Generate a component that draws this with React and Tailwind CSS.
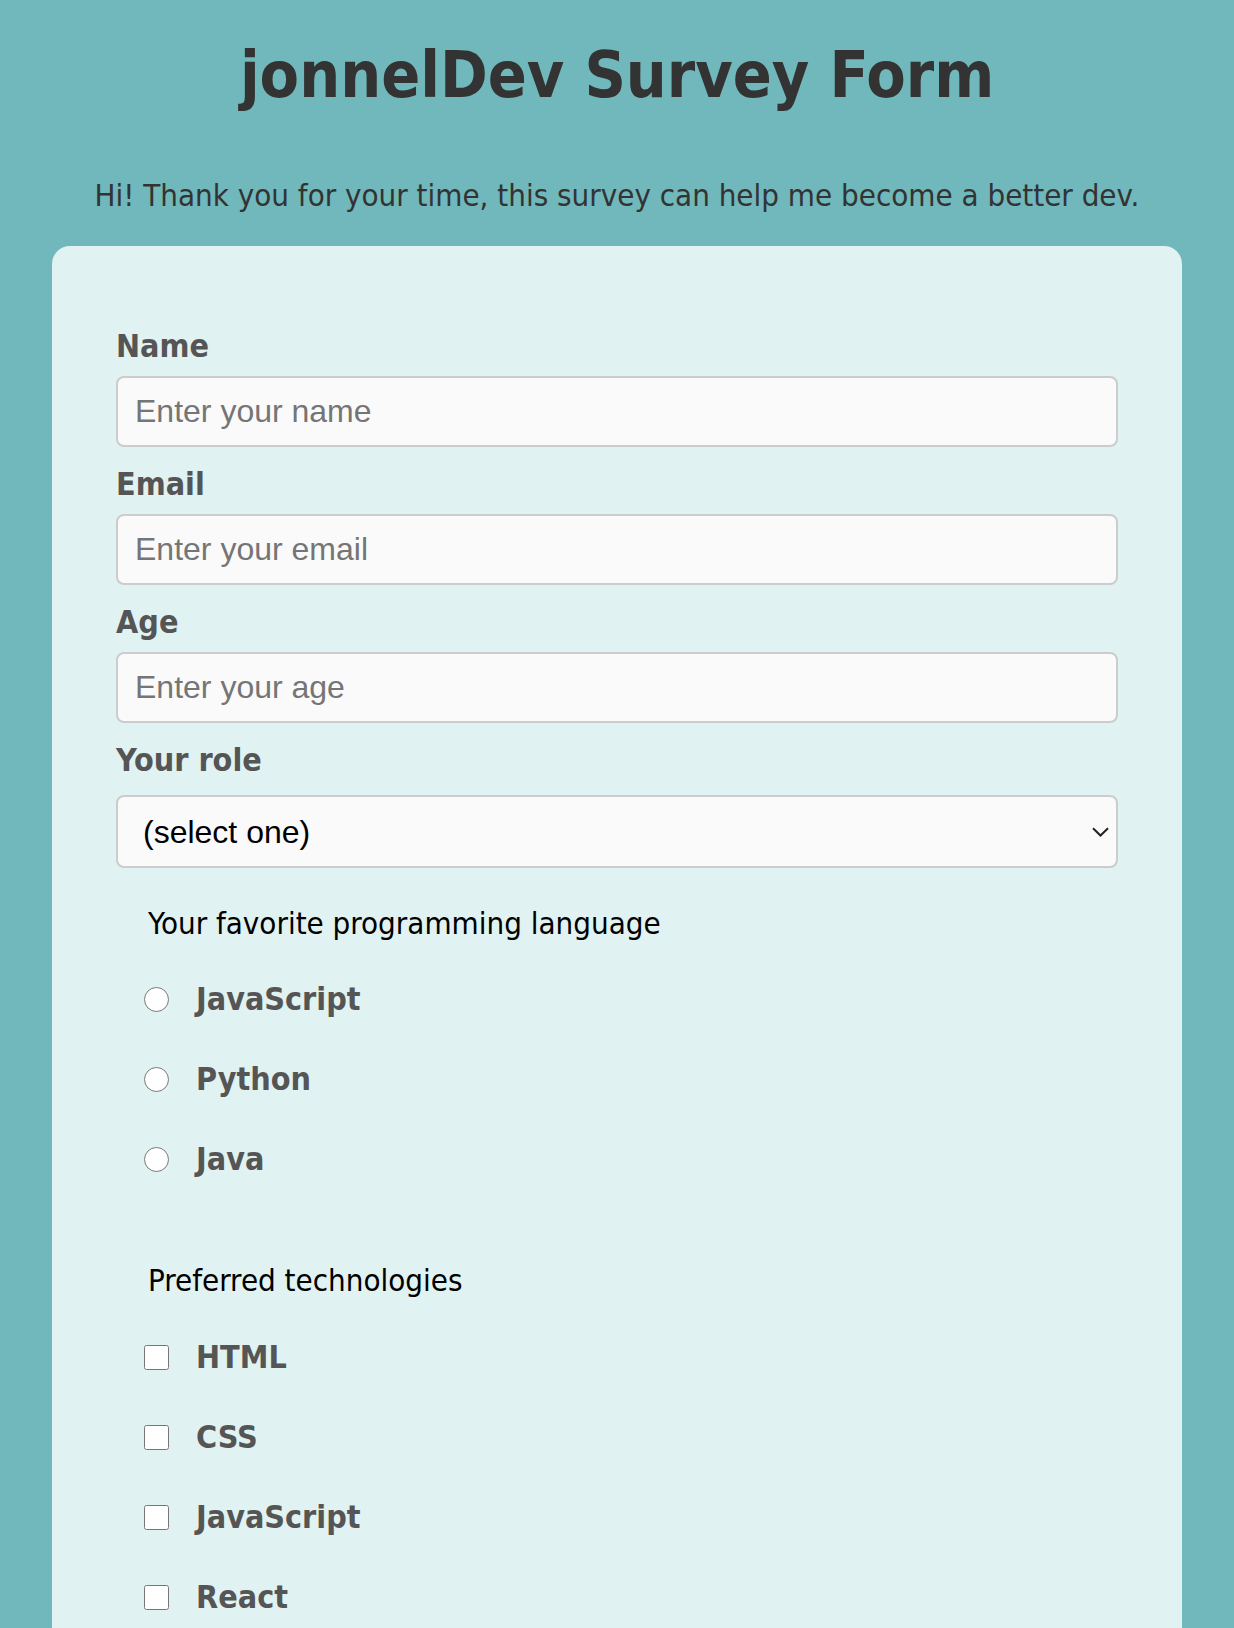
import React from "react";

const F = "font-['DejaVu_Sans_Condensed','DejaVu_Sans',sans-serif]";

function Field({ label, placeholder, type = "text", first }) {
  return (
    <div className={first ? "" : "mt-[21px]"}>
      <label className={`block text-[32px] leading-none font-bold text-[#555] ${F}`}>{label}</label>
      <input
        type={type}
        placeholder={placeholder}
        className="mt-[14px] block w-full h-[71px] border-2 border-[#cccccc] rounded-[8px] bg-[#fafafa] px-[17px] text-[32px] font-['Liberation_Sans',Arial,sans-serif] text-black placeholder:text-[#757575] outline-none"
      />
    </div>
  );
}

function Choice({ type, name, label }) {
  return (
    <label className="flex items-center h-[80px] pl-[28px]">
      <input type={type} name={name} className="w-[25px] h-[25px] m-0 shrink-0" />
      <span className={`ml-[27px] text-[32px] leading-none font-bold text-[#555] ${F}`}>{label}</span>
    </label>
  );
}

export default function App() {
  return (
    <div className={`min-h-screen bg-[#70b8bb] ${F} pb-[60px]`}>
      <h1 className="pt-[43px] text-center text-[64px] leading-none font-bold text-[#333]">jonnelDev Survey Form</h1>
      <p className="mt-[73px] text-center text-[31px] leading-none text-[#333]">
        Hi! Thank you for your time, this survey can help me become a better dev.
      </p>
      <form className="mt-[35px] mx-[52px] bg-[#e0f2f1] rounded-[18px] px-[64px] pt-[84px] pb-[60px]">
        <Field first label="Name" placeholder="Enter your name" />
        <Field label="Email" placeholder="Enter your email" type="email" />
        <Field label="Age" placeholder="Enter your age" type="number" />
        <div className="mt-[21px]">
          <label className="block text-[32px] leading-none font-bold text-[#555]">Your role</label>
          <div className="relative mt-[19px]">
            <select className="block w-full h-[73px] appearance-none border-2 border-[#cccccc] rounded-[8px] bg-[#fafafa] pl-[25px] text-[32px] font-['Liberation_Sans',Arial,sans-serif] text-black outline-none">
              <option>(select one)</option>
              <option>Student</option>
              <option>Full Time Job</option>
              <option>Full Time Learner</option>
              <option>Other</option>
            </select>
            <svg className="pointer-events-none absolute right-[9px] top-[32px]" width="17" height="10" viewBox="0 0 17 10" fill="none">
              <path d="M1 1.2 L8.5 8.5 L16 1.2" stroke="#222" strokeWidth="2" />
            </svg>
          </div>
        </div>

        <div className="mt-[40px]">
          <p className="pl-[32px] text-[31px] leading-none text-black">Your favorite programming language</p>
          <div className="mt-[20px]">
            <Choice type="radio" name="lang" label="JavaScript" />
            <Choice type="radio" name="lang" label="Python" />
            <Choice type="radio" name="lang" label="Java" />
          </div>
        </div>

        <div className="mt-[66px]">
          <p className="pl-[32px] text-[31px] leading-none text-black">Preferred technologies</p>
          <div className="mt-[21px]">
            <Choice type="checkbox" name="tech" label="HTML" />
            <Choice type="checkbox" name="tech" label="CSS" />
            <Choice type="checkbox" name="tech" label="JavaScript" />
            <Choice type="checkbox" name="tech" label="React" />
            <Choice type="checkbox" name="tech" label="Node.js" />
          </div>
        </div>

        <div className="mt-[40px]">
          <label className="block text-[32px] leading-none font-bold text-[#555]">Any comments or suggestions?</label>
          <textarea
            placeholder="Enter your comment here..."
            className="mt-[14px] block w-full h-[160px] border-2 border-[#cccccc] rounded-[8px] bg-[#fafafa] px-[17px] py-[12px] text-[32px] font-['Liberation_Sans',Arial,sans-serif] placeholder:text-[#757575] outline-none"
          />
        </div>
        <button type="button" className="mt-[30px] w-full h-[71px] rounded-[8px] bg-[#2f8f8f] text-white text-[32px] font-bold">
          Submit
        </button>
      </form>
    </div>
  );
}
